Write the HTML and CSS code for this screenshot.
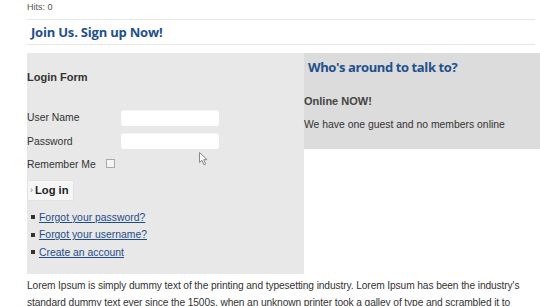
FILE: index.html
```html
<!DOCTYPE html>
<html>
<head>
<meta charset="utf-8">
<link rel="stylesheet" href="styles.css">
</head>
<body>
<div class="page">
  <div class="hits">Hits: 0</div>
  <div class="title-bar"><h1 class="title">Join Us. Sign up Now!</h1></div>
  <div class="columns">
    <div class="login">
      <h3 class="login-title">Login Form</h3>
      <div class="row first"><span class="label">User Name</span><span class="input"></span></div>
      <div class="row"><span class="label">Password</span><span class="input"></span></div>
      <div class="row remember"><span class="label-short">Remember Me</span><span class="checkbox"></span></div>
      <div class="btn"><span class="arrow">›</span>Log in</div>
      <ul class="links">
        <li><a href="#">Forgot your password?</a></li>
        <li><a href="#">Forgot your username?</a></li>
        <li><a href="#">Create an account</a></li>
      </ul>
    </div>
    <div class="who">
      <h2 class="who-title">Who's around to talk to?</h2>
      <h4 class="online">Online NOW!</h4>
      <p class="who-text">We have one guest and no members online</p>
    </div>
  </div>
  <p class="lorem">Lorem Ipsum is simply dummy text of the printing and typesetting industry. Lorem Ipsum has been the industry's standard dummy text ever since the 1500s, when an unknown printer took a galley of type and scrambled it to make a type specimen book.</p>
  <svg class="cursor" width="10" height="14" viewBox="0 0 10 14"><path d="M0.5 0.5 L0.5 10.5 L3 8.3 L5 12.8 L6.6 12.1 L4.7 7.7 L8 7.6 Z" fill="#fff" stroke="#888" stroke-width="1"/></svg>
</div>
</body>
</html>
```
FILE: styles.css
```css
body {
  margin: 0;
  font-family: "Liberation Sans", Arial, sans-serif;
  font-size: 10.4px;
  color: #333;
  background: #fff;
}
.page {
  position: relative;
  padding-left: 27px;
  overflow: hidden;
  height: 306px;
}
.hits {
  font-size: 9px;
  color: #555;
  height: 20px;
  line-height: 14px;
}
.title-bar {
  width: 508px;
  border-top: 1px solid #e6e6e6;
  border-bottom: 1px solid #e6e6e6;
  height: 24px;
  display: flex;
  align-items: center;
  margin-top: -1px;
}
.title {
  margin: 0 0 0 4px;
  font-family: "Open Sans", sans-serif;
  font-weight: 700;
  font-size: 13px;
  color: #22508c;
  letter-spacing: -0.2px;
}
.columns {
  display: flex;
  margin-top: 8px;
  align-items: flex-start;
}
.login {
  width: 277px;
  height: 221px;
  background: #e8e8e8;
  box-sizing: border-box;
}
.login-title {
  margin: 17px 0 0 0;
  font-size: 11px;
  font-weight: 700;
  color: #333;
  height: 14px;
  line-height: 14px;
}
.row {
  display: flex;
  align-items: center;
  height: 23.5px;
}
.row.first { margin-top: 22px; }
.label {
  width: 94px;
}
.label-short {
  width: 79px;
}
.input {
  width: 98px;
  height: 16px;
  background: #fff;
  border-radius: 3px;
  box-shadow: inset 0 1px 1px rgba(0,0,0,0.04);
}
.checkbox {
  width: 7px;
  height: 7px;
  border: 1px solid #aaa;
  background: #f4f4f4;
  margin-top: -2px;
}
.btn {
  display: inline-flex;
  align-items: center;
  margin-top: 3px;
  height: 19px;
  padding: 0 4px 0 2px;
  background: #f6f6f6;
  border: 1px solid #e2e2e2;
  font-size: 11.2px;
  font-weight: 700;
  color: #222;
}
.arrow {
  font-size: 9px;
  color: #777;
  margin-right: 2px;
  font-weight: 400;
}
.links {
  list-style: none;
  margin: 8px 0 0 0;
  padding: 0;
}
.links li {
  display: flex;
  align-items: center;
  height: 17.5px;
}
.links li::before {
  content: "";
  width: 4px;
  height: 4px;
  background: #333;
  margin: 0 4px 0 4px;
}
.links a {
  color: #1f4c8a;
  text-decoration: underline;
}
.who {
  width: 236px;
  height: 96px;
  background: #dcdcdc;
  box-sizing: border-box;
  padding-left: 4px;
}
.who-title {
  margin: 4px 0 0 0;
  font-family: "Open Sans", sans-serif;
  font-weight: 700;
  font-size: 13px;
  color: #22508c;
  letter-spacing: -0.4px;
  height: 20px;
  line-height: 20px;
}
.online {
  margin: 17px 0 0 -4px;
  font-size: 11px;
  font-weight: 700;
  color: #444;
  height: 14px;
  line-height: 14px;
}
.who-text {
  margin: 10px 0 0 -4px;
  line-height: 14px;
  color: #333;
}
.lorem {
  margin: 3px 0 0 0;
  width: 510px;
  font-size: 10.2px;
  letter-spacing: -0.1px;
  line-height: 17px;
  color: #333;
}
.cursor {
  position: absolute;
  left: 199px;
  top: 152px;
}
```
